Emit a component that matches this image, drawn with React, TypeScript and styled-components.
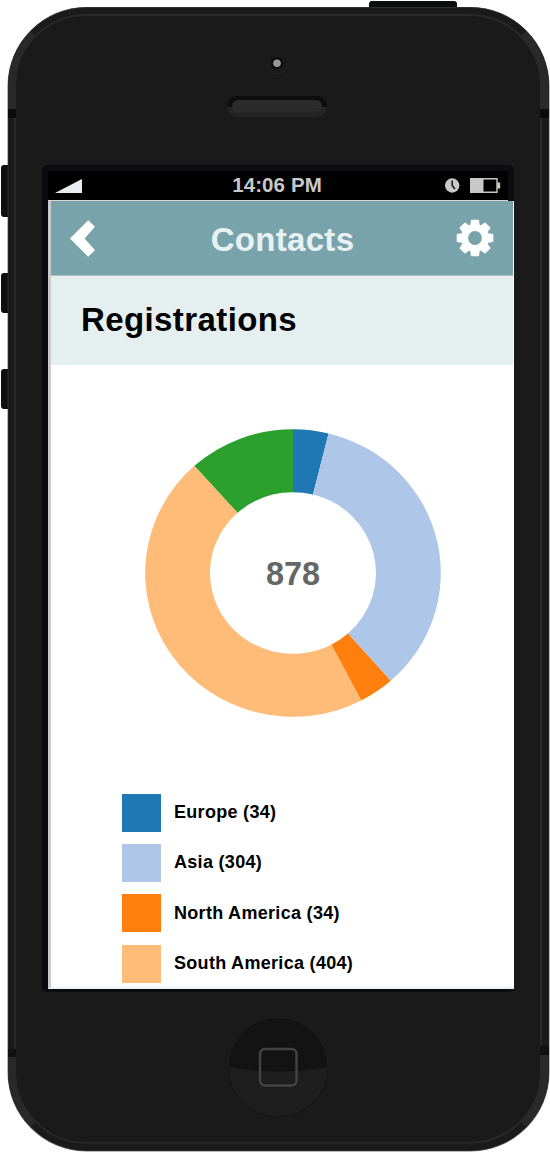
import React from "react";
import styled, { createGlobalStyle } from "styled-components";

const GlobalStyle = createGlobalStyle`
  * { box-sizing: border-box; }
  body {
    margin: 0;
    background: #fff;
    font-family: "Liberation Sans", Arial, sans-serif;
    font-weight: 700;
    overflow: hidden;
  }
`;

const Stage = styled.main`
  position: relative;
  width: 550px;
  height: 1152px;
  padding: 7px 1px 1px 8px;
`;

const Body = styled.div`
  position: relative;
  display: flex;
  flex-direction: column;
  width: 541px;
  height: 1144px;
  padding-left: 34px;
  border-radius: 79px;
  background: #1a1a1a;
`;

const HardwareButton = styled.span<{ $top: number }>`
  position: absolute;
  left: 1px;
  top: ${(p) => p.$top}px;
  width: 8px;
  height: 40px;
  border-radius: 3px 0 0 3px;
  background: #0d0f0f;
`;

const MuteSwitch = styled(HardwareButton)`
  height: 52px;
`;

const PowerButton = styled.span`
  position: absolute;
  left: 369px;
  top: 1px;
  width: 88px;
  height: 8px;
  border-radius: 3px 3px 0 0;
  background: #0b0f0e;
`;

const Rim = styled.svg`
  position: absolute;
  left: -8px;
  top: -7px;
`;

const Earpiece = styled.div`
  display: flex;
  flex-direction: column;
  align-items: center;
  width: 470px;
  height: 158px;
  padding-top: 43px;
`;

const Bezel = styled.section`
  position: relative;
  width: 472px;
  height: 827px;
  padding: 6px 0 0 6px;
  border-radius: 5px;
  background: #0b0c10;
`;

const StatusBar = styled.div`
  display: grid;
  grid-template-columns: 1fr auto 1fr;
  align-items: center;
  width: 460px;
  height: 30px;
  padding: 0 7px;
  border-bottom: 1px solid #d8d6d4;
  background: #000;
  color: #c8c8c8;
`;

const Clock = styled.time`
  margin-left: -2px;
  font-size: 20.5px;
  line-height: 27px;
  letter-spacing: 0.1px;
  transform: translateY(-1px);
`;

const StatusIcons = styled.div`
  display: flex;
  justify-content: flex-end;
  align-items: center;
  gap: 10px;
`;

const Screen = styled.div`
  width: 466px;
  height: 788px;
  border-left: 3px solid #cac8ca;
  border-bottom: 2px solid #f0f2f1;
  background: #fff;
`;

const TitleBar = styled.header`
  display: flex;
  align-items: center;
  justify-content: space-between;
  width: 462px;
  height: 75px;
  padding: 0 19px;
  border-bottom: 1px solid #a9c5c9;
  background: #79a3ab;
`;

const Title = styled.h1`
  margin: 4px 0 0 13px;
  font-size: 33px;
  line-height: 40px;
  letter-spacing: 0.3px;
  color: #e8f1f2;
`;

const Section = styled.div`
  width: 462px;
  height: 89px;
  padding: 24px 30px;
  background: #e6eff0;
`;

const Heading = styled.h2`
  margin: 0;
  font-size: 33px;
  line-height: 40px;
  letter-spacing: 0.4px;
  color: #000;
`;

const ChartArea = styled.div`
  display: grid;
  justify-items: center;
  align-items: center;
  width: 484px;
  height: 416px;
`;

const Donut = styled.svg`
  grid-area: 1 / 1;
`;

const Total = styled.strong`
  grid-area: 1 / 1;
  padding-top: 2px;
  font-size: 32.5px;
  line-height: 40px;
  color: #666;
`;

const Legend = styled.ul`
  display: flex;
  flex-direction: column;
  gap: 12.4px;
  margin: 0;
  padding: 12.6px 0 0 71px;
  list-style: none;
`;

const LegendItem = styled.li`
  display: flex;
  align-items: center;
  gap: 13px;
  height: 38px;
  font-size: 18px;
  letter-spacing: 0.3px;
  color: #000;
`;

const Swatch = styled.span<{ $color: string }>`
  width: 39px;
  height: 38px;
  background: ${(p) => p.$color};
`;

const HomeRow = styled.div`
  display: flex;
  justify-content: center;
  width: 472px;
  padding-top: 24px;
`;

const regions = [
  { name: "Europe", count: 34, color: "#1f77b4" },
  { name: "Asia", count: 304, color: "#aec7e8" },
  { name: "North America", count: 34, color: "#ff7f0e" },
  { name: "South America", count: 404, color: "#ffbb78" },
  { name: "Other", count: 102, color: "#2ca02c" },
];
const total = regions.reduce((sum, r) => sum + r.count, 0);

function slicePath(start: number, end: number) {
  const at = (share: number, rx: number, ry: number) => {
    const a = share * 2 * Math.PI;
    return `${148 + rx * Math.sin(a)} ${144 - ry * Math.cos(a)}`;
  };
  const large = end - start > 0.5 ? 1 : 0;
  return `M${at(start, 147.8, 143.8)} A147.8 143.8 0 ${large} 1 ${at(end, 147.8, 143.8)}
    L${at(end, 83, 80.8)} A83 80.8 0 ${large} 0 ${at(start, 83, 80.8)} Z`;
}

function DonutChart() {
  let sum = 0;
  return (
    <Donut width="296" height="288" viewBox="0 0 296 288">
      {regions.map((r) => {
        const start = sum / total;
        sum += r.count;
        return <path key={r.name} d={slicePath(start, sum / total)} fill={r.color} />;
      })}
    </Donut>
  );
}

function DeviceRim() {
  return (
    <Rim width="550" height="1152" viewBox="0 0 550 1152" fill="none">
      <rect x="8" y="7.5" width="541" height="1143.5" rx="78.5" stroke="#3b3b3b" strokeOpacity=".7" />
      <rect x="15" y="15" width="526" height="1127.7" rx="71" stroke="#292929" strokeWidth="2" />
      <g fill="#292929">
        <path d="M8 109V86A78 78 0 0 1 31 31L36 36A70 70 0 0 0 16 86V109Z" />
        <path d="M549 109V86A78 78 0 0 0 526 31L521 36A70 70 0 0 1 540 86V109Z" />
        <path d="M8 1057V1072A78 78 0 0 0 31 1127L36 1122A70 70 0 0 1 16 1072V1057Z" />
        <path d="M549 1055V1072A78 78 0 0 1 526 1127L521 1122A70 70 0 0 0 540 1072V1055Z" />
      </g>
      <path d="M8 109h8v9H8zM540 109h9v9h-9z" fill="#0c0c0c" />
      <path d="M8 1049h8v8H8zM540 1046h9v9h-9z" fill="#111" />
    </Rim>
  );
}

function CameraAndSpeaker() {
  return (
    <svg width="102" height="70" viewBox="0 0 102 70" fill="none">
      <path d="M41 14a10 10 0 0 0 20 0" stroke="#272727" />
      <circle cx="51" cy="13.3" r="6" fill="#0d0d0d" />
      <circle cx="51" cy="13.3" r="3.8" fill="#999" />
      <path d="M1 57a10.5 11 0 0 1 10.5-11h79A10.5 11 0 0 1 101 57Z" fill="#0d0d0d" />
      <path d="M1 57a10.5 10 0 0 0 10.5 10h79A10.5 10 0 0 0 101 57Z" fill="#242424" />
      <rect x="6" y="50" width="90" height="12" rx="6" fill="url(#mesh)" />
      <defs>
        <pattern id="mesh" width="3" height="3" patternUnits="userSpaceOnUse">
          <path d="M0 0h3v3H0z" fill="#272727" />
          <path d="M0 3 3 0" stroke="#333" />
        </pattern>
      </defs>
    </svg>
  );
}

function Gear() {
  return (
    <svg width="38" height="38" viewBox="-19 -19 38 38">
      <g fill="#fff" stroke="#fff" strokeWidth="1.2" strokeLinejoin="round">
        {[0, 45, 90, 135, 180, 225, 270, 315].map((a) => (
          <path key={a} transform={`rotate(${a})`} d="M-4.3-12-3.4-17.7H3.4L4.3-12Z" />
        ))}
      </g>
      <circle r="10.4" fill="none" stroke="#fff" strokeWidth="7" />
    </svg>
  );
}

function HomeButton() {
  return (
    <svg width="102" height="102" viewBox="0 0 102 102" fill="none">
      <circle cx="51" cy="51" r="50" fill="#1e1e1e" />
      <path d="M1 51a50 50 0 0 1 100 0Q51 60 1 51Z" fill="#131313" />
      <circle cx="51" cy="51" r="50" stroke="#141414" />
      <path d="M1 51a50 50 0 0 1 100 0" stroke="#202020" />
      <rect x="33" y="33" width="36.5" height="36.5" rx="5" stroke="#444" strokeWidth="2.4" />
    </svg>
  );
}

export default function App() {
  return (
    <>
      <GlobalStyle />
      <Stage>
        <MuteSwitch $top={165} />
        <HardwareButton $top={273} />
        <HardwareButton $top={369} />
        <PowerButton />
        <Body>
          <DeviceRim />
          <Earpiece>
            <CameraAndSpeaker />
          </Earpiece>
          <Bezel>
            <StatusBar>
              <svg width="28" height="14" viewBox="0 0 28 14">
                <path d="M0 14 27 0V14Z" fill="#e9edf2" />
              </svg>
              <Clock>14:06 PM</Clock>
              <StatusIcons>
                <svg width="15" height="15" viewBox="0 0 15 15" fill="none">
                  <circle cx="7.2" cy="7.5" r="7.2" fill="#c8c8c8" />
                  <path d="M7.2 2.5V7.5L10 11" stroke="#111" strokeWidth="1.5" />
                </svg>
                <svg width="31" height="15" viewBox="0 0 31 15" fill="none">
                  <path d="M.7.7H27V14.3H.7Z" stroke="#c8c8c8" strokeWidth="1.4" />
                  <path d="M0 0H13.5V15H0ZM27 4.5h3.2v6H27Z" fill="#c8c8c8" />
                </svg>
              </StatusIcons>
            </StatusBar>
            <Screen>
              <TitleBar>
                <svg width="26" height="37" viewBox="0 0 26 37">
                  <path d="M0 18.5 18.2.3 25 6.7 14.6 18.5 25 30.3 18.2 36.7Z" fill="#fff" />
                </svg>
                <Title>Contacts</Title>
                <Gear />
              </TitleBar>
              <Section>
                <Heading>Registrations</Heading>
              </Section>
              <ChartArea>
                <DonutChart />
                <Total>{total}</Total>
              </ChartArea>
              <Legend>
                {regions.slice(0, 4).map((r) => (
                  <LegendItem key={r.name}>
                    <Swatch $color={r.color} />
                    {r.name} ({r.count})
                  </LegendItem>
                ))}
              </Legend>
            </Screen>
          </Bezel>
          <HomeRow>
            <HomeButton />
          </HomeRow>
        </Body>
      </Stage>
    </>
  );
}
